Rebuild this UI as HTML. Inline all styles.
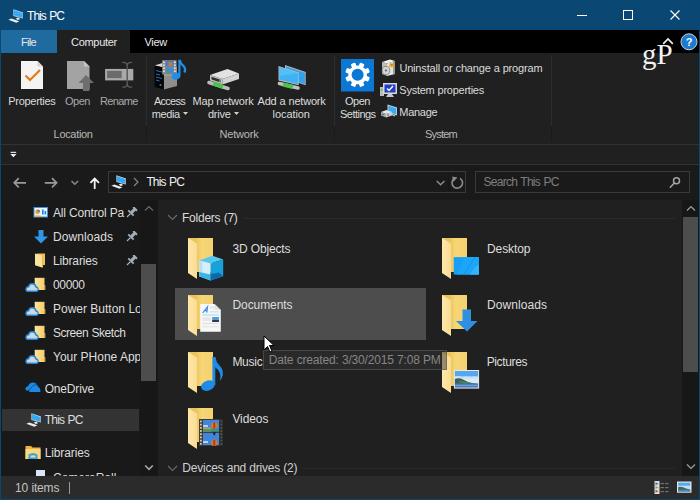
<!DOCTYPE html>
<html><head><meta charset="utf-8"><style>
html,body{margin:0;padding:0;width:700px;height:500px;overflow:hidden;background:#202020;font-family:"Liberation Sans", sans-serif;}
#r{position:relative;width:700px;height:500px;overflow:hidden;}
</style></head><body><div id="r">
<div style="position:absolute;left:0px;top:0px;width:700px;height:30px;background:#0a4873;"></div>
<svg style="position:absolute;left:4.8px;top:5.8px;" width="20" height="18" viewBox="0 0 20 18">
<polygon points="8.4,3.2 18,6.5 18,12.6 8.4,10.1" fill="#d6dde2"/>
<polygon points="9,4.1 17.3,6.9 17.3,11.8 9,9.6" fill="#33aaf6"/>
<polygon points="17.3,6.9 18,6.5 18,12.6 17.3,11.8" fill="#8a9aa6"/>
<polygon points="10.8,12.2 13.5,11.6 15.2,13.3 12.4,13.9" fill="#e6e6e6"/>
<polygon points="3.3,13.7 6.3,12.5 14.4,15.2 11.4,16.7" fill="#ececec"/>
</svg>
<div style="position:absolute;left:577px;top:15px;width:10px;height:1px;background:#fff;"></div>
<div style="position:absolute;left:623px;top:10px;width:10px;height:10px;background:transparent;border:1px solid #fff;box-sizing:border-box;"></div>
<svg style="position:absolute;left:670px;top:10px;" width="10" height="10" viewBox="0 0 10 10"><path d="M0.5 0.5 L9.5 9.5 M9.5 0.5 L0.5 9.5" stroke="#fff" stroke-width="1.1"/></svg>
<div style="position:absolute;left:0px;top:30px;width:700px;height:23px;background:#000;"></div>
<div style="position:absolute;left:1px;top:30px;width:56px;height:23px;background:#1f6a9e;"></div>
<div style="position:absolute;left:57px;top:30px;width:73px;height:23px;background:#202020;"></div>
<svg style="position:absolute;left:680px;top:33px;" width="18" height="18" viewBox="0 0 18 18"><circle cx="9" cy="8.8" r="8" fill="#1a7ad4" stroke="#cfcfcf" stroke-width="1"/><text x="9" y="13" font-family="Liberation Sans" font-weight="bold" font-size="11" fill="#fff" text-anchor="middle">?</text></svg>
<div style="position:absolute;left:1px;top:53px;width:698px;height:91px;background:#202020;"></div>
<div style="position:absolute;left:146px;top:55px;width:1px;height:71px;background:#2d2d2d;"></div>
<div style="position:absolute;left:146px;top:126px;width:1px;height:15px;background:#1a1a1a;"></div>
<div style="position:absolute;left:334px;top:55px;width:1px;height:71px;background:#2d2d2d;"></div>
<div style="position:absolute;left:334px;top:126px;width:1px;height:15px;background:#1a1a1a;"></div>
<div style="position:absolute;left:551px;top:55px;width:1px;height:71px;background:#2d2d2d;"></div>
<div style="position:absolute;left:551px;top:126px;width:1px;height:15px;background:#1a1a1a;"></div>
<svg style="position:absolute;left:21px;top:60px;" width="23" height="30" viewBox="0 0 23 30">
<path d="M0 1 H16.5 L22 6.5 V29 H0 Z" fill="#f4f4f4"/>
<path d="M16.5 1 V6.5 H22 Z" fill="#d4d4d4"/>
<path d="M4.5 15.5 L9 20 L19 10" stroke="#e07b1a" stroke-width="2.2" fill="none"/>
</svg>
<svg style="position:absolute;left:67px;top:60px;" width="28" height="31" viewBox="0 0 28 31">
<path d="M0 1 H17 L22.5 6.5 V29 H0 Z" fill="#a3a3a3"/>
<path d="M17 1 V6.5 H22.5 Z" fill="#c4c4c4"/>
<path d="M11.5 23 L19 15 L27 23 H22.5 V31 H16 V23 Z" fill="#6e6e6e"/>
</svg>
<svg style="position:absolute;left:104px;top:60px;" width="30" height="30" viewBox="0 0 30 30">
<rect x="1.1" y="8.9" width="28.2" height="11.5" fill="#a9a9a9"/>
<rect x="3.1" y="10.9" width="14.6" height="7.2" fill="#6b6b6b"/>
<path d="M23.2 5 V24.5" stroke="#555" stroke-width="1.4"/>
<path d="M18.3 2.3 Q23.2 2 23.2 6 M28.1 2.3 Q23.2 2 23.2 6 M18.3 27.2 Q23.2 27.5 23.2 23.5 M28.1 27.2 Q23.2 27.5 23.2 23.5" stroke="#5c5c5c" stroke-width="1.3" fill="none"/>
</svg>
<svg style="position:absolute;left:145px;top:55px;" width="44" height="38" viewBox="0 0 44 38">
<polygon points="9.6,10.4 17.5,8 32,12 18.8,12.5" fill="#d8d8d8"/>
<polygon points="18.8,12.5 32,12 32,31 18.8,34.4" fill="#8e8e8e"/>
<polygon points="18.8,12.5 32,12 32,20 18.8,21" fill="#a8a8a8"/>
<polygon points="9.6,10.4 18.8,12.5 18.8,34.4 9.6,32" fill="#060606"/>
<path d="M11 15.5 L17 17 M11 19 L15 20 M11 22 L17 23.5 M11 25 L14.5 26" stroke="#2a80d0" stroke-width="0.9"/>
<circle cx="15.5" cy="30" r="1" fill="#2a80d0"/>
<rect x="17.2" y="5.2" width="14.4" height="14.4" fill="#8a8a8a"/>
<g fill="#e0e0e0"><rect x="18" y="6.5" width="1.8" height="1.5"/><rect x="18" y="9.5" width="1.8" height="1.5"/><rect x="18" y="12.5" width="1.8" height="1.5"/><rect x="18" y="15.5" width="1.8" height="1.5"/>
<rect x="29" y="6.5" width="1.8" height="1.5"/><rect x="29" y="9.5" width="1.8" height="1.5"/><rect x="29" y="12.5" width="1.8" height="1.5"/><rect x="29" y="15.5" width="1.8" height="1.5"/></g>
<rect x="20.8" y="6" width="7.6" height="5.6" fill="#3f7fd0"/>
<rect x="23.5" y="7" width="3.5" height="4" fill="#c08030"/>
<rect x="20.8" y="12.8" width="7.6" height="6" fill="#4a86d6"/>
<rect x="21" y="16" width="4" height="2.5" fill="#50a060"/>
<path d="M34.4 4.8 V21" stroke="#1e8ee8" stroke-width="2.2"/>
<path d="M34.6 5 Q35.5 9 38.5 11 Q41 13.5 39.5 17.5" stroke="#1e8ee8" stroke-width="2.4" fill="none"/>
<ellipse cx="31" cy="21.3" rx="4.3" ry="3.3" fill="#1e8ee8" transform="rotate(-15 31 21.3)"/>
</svg>
<svg style="position:absolute;left:183px;top:112px;" width="5" height="3" viewBox="0 0 5 3"><polygon points="0,0 5,0 2.5,3" fill="#d0d0d0"/></svg>
<svg style="position:absolute;left:204px;top:62px;" width="38" height="30" viewBox="0 0 38 30">
<line x1="5" y1="20.5" x2="24" y2="26.5" stroke="#bdbdbd" stroke-width="3.6" stroke-linecap="round"/>
<line x1="9" y1="21.8" x2="19" y2="25" stroke="#46c846" stroke-width="3.8"/>
<polygon points="6,13 23.5,7 35,11.5 18.5,17" fill="#e2e2e2"/>
<polygon points="6,13 18.5,17 18.5,22.5 6,18.5" fill="#c4c4c4"/>
<polygon points="7.5,14.8 16.5,17.8 16.5,20.5 7.5,17.5" fill="#303030"/>
<rect x="15" y="18.3" width="1.2" height="1.6" fill="#3c3"/>
<polygon points="18.5,17 35,11.5 35,17 18.5,22.5" fill="#d2d2d2"/>
</svg>
<svg style="position:absolute;left:234px;top:112px;" width="5" height="3" viewBox="0 0 5 3"><polygon points="0,0 5,0 2.5,3" fill="#d0d0d0"/></svg>
<svg style="position:absolute;left:277px;top:64px;" width="30" height="27" viewBox="0 0 30 27">
<polygon points="8,1 28.7,8 28.7,21.3 8,14.5" fill="#b8b8b8"/>
<polygon points="8.8,2.2 27.9,8.7 27.9,20.3 8.8,13.8" fill="#2ea4ee"/>
<line x1="2.5" y1="19.5" x2="21" y2="24" stroke="#c0c0c0" stroke-width="3.6" stroke-linecap="round"/>
<line x1="6" y1="20.5" x2="16" y2="23" stroke="#4cc24c" stroke-width="4"/>
<polygon points="1.5,2 21.7,8.5 21.7,21.3 1.5,16.5" fill="#bcbcbc"/>
<polygon points="2.3,3 20.9,9.2 20.9,20.3 2.3,15.5" fill="#3db3f5"/>
<polygon points="2.3,3 20.9,9.2 2.3,12" fill="#62c4fa" opacity="0.6"/>
</svg>
<svg style="position:absolute;left:341px;top:59px;" width="33" height="33" viewBox="0 0 33 33">
<rect x="0" y="0" width="33" height="32.5" fill="#0a78d4"/>
<g transform="translate(16.6 15.8)">
<circle r="9.4" fill="#fff"/>
<g fill="#fff"><rect x="-2.4" y="-12.4" width="4.8" height="5" rx="1" transform="rotate(22.5)"/><rect x="-2.4" y="-12.4" width="4.8" height="5" rx="1" transform="rotate(67.5)"/><rect x="-2.4" y="-12.4" width="4.8" height="5" rx="1" transform="rotate(112.5)"/><rect x="-2.4" y="-12.4" width="4.8" height="5" rx="1" transform="rotate(157.5)"/><rect x="-2.4" y="-12.4" width="4.8" height="5" rx="1" transform="rotate(202.5)"/><rect x="-2.4" y="-12.4" width="4.8" height="5" rx="1" transform="rotate(247.5)"/><rect x="-2.4" y="-12.4" width="4.8" height="5" rx="1" transform="rotate(292.5)"/><rect x="-2.4" y="-12.4" width="4.8" height="5" rx="1" transform="rotate(337.5)"/></g>
<circle r="6" fill="#0a78d4"/>
</g>
</svg>
<svg style="position:absolute;left:381px;top:59px;" width="16" height="18" viewBox="0 0 16 18">
<polygon points="1,3 9,0.5 14,2 6,4.5" fill="#f2f2f2"/>
<polygon points="1,3 6,4.5 6,17 1,15" fill="#bdbdbd"/>
<polygon points="6,4.5 14,2 14,15 6,17" fill="#e4e4e4"/>
<polygon points="12,2.6 14,2 14,15 12,15.6" fill="#9a9a9a"/>
<ellipse cx="5" cy="11.5" rx="3.8" ry="4.2" fill="#d4d4d4" stroke="#7a7a7a" stroke-width="0.8"/>
<circle cx="5" cy="11.5" r="1.1" fill="#666"/>
<circle cx="10.3" cy="6.3" r="2.3" fill="#f2b51c"/>
<circle cx="10.8" cy="5.8" r="0.9" fill="#e05a20"/>
</svg>
<svg style="position:absolute;left:380px;top:82px;" width="17" height="16" viewBox="0 0 17 16">
<rect x="0" y="5" width="4" height="9" fill="#bdbdbd"/>
<rect x="1" y="7" width="1.5" height="1.5" fill="#3c3"/>
<rect x="3" y="1" width="14" height="11" fill="#d8d8d8"/>
<rect x="4.5" y="2.5" width="11" height="8" fill="#1f3fc8"/>
<path d="M7 6.5 L9 8.5 L13 4" stroke="#fff" stroke-width="1.4" fill="none"/>
<polygon points="8,12 12,12 14,15 6,15" fill="#c8c8c8"/>
</svg>
<svg style="position:absolute;left:380px;top:103px;" width="18" height="15" viewBox="0 0 18 15">
<polygon points="7.5,1.5 17,4.5 17,12.5 7.5,9.5" fill="#d8d8d8"/>
<polygon points="8.3,2.6 16.3,5.2 16.3,11.6 8.3,9" fill="#3aaaf5"/>
<polygon points="12,11 15,12 15,13.5 12,12.5" fill="#bdbdbd"/>
<polygon points="1,9 6.5,7 12,9 6,11" fill="#e6e6e6"/>
<polygon points="1,9 6,11 6,14.5 1,12.5" fill="#a8a8a8"/>
<polygon points="6,11 12,9 12,12.5 6,14.5" fill="#cfcfcf"/>
<circle cx="3" cy="11.5" r="0.8" fill="#555"/><circle cx="8" cy="12" r="0.8" fill="#555"/>
</svg>
<div style="position:absolute;left:642px;top:39.5px;font-family:'Liberation Serif',serif;font-size:29px;line-height:29px;color:#f2f2f2;letter-spacing:0px;z-index:5">gP</div>
<svg style="position:absolute;left:662px;top:37px;" width="12" height="8" viewBox="0 0 12 8"><path d="M1.2 6.8 L6 2 L10.8 6.8" stroke="#ececec" stroke-width="1.7" fill="none"/></svg>
<div style="position:absolute;left:1px;top:144px;width:698px;height:1px;background:#323232;"></div>
<div style="position:absolute;left:1px;top:145px;width:698px;height:19px;background:#202020;"></div>
<div style="position:absolute;left:1px;top:164px;width:698px;height:1px;background:#323232;"></div>
<svg style="position:absolute;left:10px;top:151px;" width="7" height="7" viewBox="0 0 7 7"><rect x="0.6" y="0.8" width="5.6" height="1.1" fill="#f0f0f0"/><polygon points="0.3,3 6.5,3 3.4,6.3" fill="#f0f0f0"/></svg>
<div style="position:absolute;left:1px;top:165px;width:698px;height:35px;background:#1a1a1a;"></div>
<svg style="position:absolute;left:12px;top:176px;" width="16" height="14" viewBox="0 0 16 14"><path d="M2.2 6.8 H14 M6.8 2.2 L2.2 6.8 L6.8 11.4" stroke="#9a9a9a" stroke-width="1.7" fill="none"/></svg>
<svg style="position:absolute;left:43px;top:176px;" width="16" height="14" viewBox="0 0 16 14"><path d="M1.8 6.8 H13.6 M9 2.2 L13.6 6.8 L9 11.4" stroke="#9a9a9a" stroke-width="1.7" fill="none"/></svg>
<svg style="position:absolute;left:70px;top:180px;" width="10" height="6" viewBox="0 0 10 6"><path d="M1.5 1 L4.8 4.3 L8.1 1" stroke="#8a8a8a" stroke-width="1.5" fill="none"/></svg>
<svg style="position:absolute;left:89px;top:176px;" width="12" height="14" viewBox="0 0 12 14"><path d="M5.7 13 V2.6 M1.4 6.8 L5.7 2.5 L10 6.8" stroke="#f4f4f4" stroke-width="1.8" fill="none"/></svg>
<div style="position:absolute;left:108px;top:171px;width:358px;height:22px;background:transparent;border:1px solid #3a3a3a;box-sizing:border-box;"></div>
<svg style="position:absolute;left:108px;top:172px;" width="20" height="18" viewBox="0 0 20 18">
<polygon points="8.4,3.2 18,6.5 18,12.6 8.4,10.1" fill="#d6dde2"/>
<polygon points="9,4.1 17.3,6.9 17.3,11.8 9,9.6" fill="#33aaf6"/>
<polygon points="17.3,6.9 18,6.5 18,12.6 17.3,11.8" fill="#8a9aa6"/>
<polygon points="10.8,12.2 13.5,11.6 15.2,13.3 12.4,13.9" fill="#e6e6e6"/>
<polygon points="3.3,13.7 6.3,12.5 14.4,15.2 11.4,16.7" fill="#ececec"/>
</svg>
<svg style="position:absolute;left:133px;top:177px;" width="6" height="10" viewBox="0 0 6 10"><path d="M1 1 L5 5 L1 9" stroke="#8a8a8a" stroke-width="1.1" fill="none"/></svg>
<svg style="position:absolute;left:436px;top:180px;" width="10" height="7" viewBox="0 0 10 7"><path d="M0.8 1 L4.6 4.8 L8.4 1" stroke="#8c8c8c" stroke-width="1.5" fill="none"/></svg>
<div style="position:absolute;left:448px;top:172px;width:1px;height:20px;background:#161616;"></div>
<svg style="position:absolute;left:450px;top:175px;" width="15" height="15" viewBox="0 0 15 15"><path d="M10.05 3.31 A5.3 5.3 0 1 1 3.2 4.4" stroke="#8c8c8c" stroke-width="1.6" fill="none"/><polygon points="2.2,1.6 7.4,2.5 3.2,6.9" fill="#8c8c8c"/></svg>
<div style="position:absolute;left:475px;top:171px;width:215px;height:22px;background:transparent;border:1px solid #3a3a3a;box-sizing:border-box;"></div>
<svg style="position:absolute;left:668px;top:176px;" width="13" height="13" viewBox="0 0 13 13"><circle cx="8.5" cy="4.8" r="3" stroke="#a4a4a4" stroke-width="1.5" fill="none"/><path d="M6.4 7 L2.3 11.2" stroke="#a4a4a4" stroke-width="1.6" stroke-linecap="round"/></svg>
<div style="position:absolute;left:1px;top:200px;width:140px;height:276px;background:#191919;"></div>
<div style="position:absolute;left:140px;top:200px;width:18px;height:276px;background:#171717;"></div>
<div style="position:absolute;left:141px;top:264px;width:15px;height:117px;background:#4d4d4d;"></div>
<svg style="position:absolute;left:144px;top:205px;" width="10" height="7" viewBox="0 0 10 7"><path d="M1 5.5 L5 1.5 L9 5.5" stroke="#6a6a6a" stroke-width="1.2" fill="none"/></svg>
<svg style="position:absolute;left:144px;top:464px;" width="10" height="7" viewBox="0 0 10 7"><path d="M1.2 1.5 L5 5.3 L8.8 1.5" stroke="#a8a8a8" stroke-width="1.6" fill="none"/></svg>
<div style="position:absolute;left:2px;top:409px;width:137px;height:22px;background:#333333;"></div>
<svg style="position:absolute;left:33px;top:206px;" width="16" height="13" viewBox="0 0 16 13"><rect x="0.5" y="1" width="14.5" height="10.5" fill="#3a92e0"/><rect x="1.5" y="2" width="12.5" height="8.5" fill="#eaf4fc"/><circle cx="4.6" cy="5.8" r="2.4" fill="#f0a020"/><path d="M4.6 5.8 V3.4 A2.4 2.4 0 0 1 7 5.8 Z" fill="#2a7fd0"/><rect x="9" y="3.5" width="1.6" height="5" fill="#2a7fd0"/><rect x="11.5" y="5" width="1.6" height="3.5" fill="#2a7fd0"/><rect x="1.5" y="9.5" width="6" height="1.5" fill="#e8a040"/></svg>
<svg style="position:absolute;left:126px;top:207px;" width="12" height="12" viewBox="0 0 12 12"><g transform="translate(6.3 4.7) rotate(45)" fill="#a3adb5"><rect x="-2.6" y="-5" width="5.2" height="2"/><rect x="-1.6" y="-3.5" width="3.2" height="5"/><rect x="-3.8" y="1" width="7.6" height="1.8"/><rect x="-0.6" y="2.5" width="1.2" height="5"/></g></svg>
<svg style="position:absolute;left:34px;top:230px;" width="14" height="14" viewBox="0 0 14 14"><rect x="4.5" y="0" width="5" height="7" fill="#2f96e8"/><polygon points="0,6.5 14,6.5 7,13.5" fill="#2f96e8"/></svg>
<svg style="position:absolute;left:126px;top:231px;" width="12" height="12" viewBox="0 0 12 12"><g transform="translate(6.3 4.7) rotate(45)" fill="#a3adb5"><rect x="-2.6" y="-5" width="5.2" height="2"/><rect x="-1.6" y="-3.5" width="3.2" height="5"/><rect x="-3.8" y="1" width="7.6" height="1.8"/><rect x="-0.6" y="2.5" width="1.2" height="5"/></g></svg>
<svg style="position:absolute;left:34px;top:253px;" width="12" height="15" viewBox="0 0 12 15"><rect x="3" y="0.5" width="8" height="11.5" fill="#eec05a"/><polygon points="1,0.5 8,2.5 8,14.5 1,12.2" fill="#fde29a"/><polygon points="8,2.5 9,2.8 9,14.5 8,14.5" fill="#e9b850"/></svg>
<svg style="position:absolute;left:126px;top:255px;" width="12" height="12" viewBox="0 0 12 12"><g transform="translate(6.3 4.7) rotate(45)" fill="#a3adb5"><rect x="-2.6" y="-5" width="5.2" height="2"/><rect x="-1.6" y="-3.5" width="3.2" height="5"/><rect x="-3.8" y="1" width="7.6" height="1.8"/><rect x="-0.6" y="2.5" width="1.2" height="5"/></g></svg>
<svg style="position:absolute;left:25px;top:277px;" width="22" height="16" viewBox="0 0 22 16"><defs><linearGradient id="cfg" x1="0" x2="1"><stop offset="0" stop-color="#fde59c"/><stop offset="1" stop-color="#f3cd6a"/></linearGradient></defs><rect x="9.7" y="0.8" width="9.8" height="12.2" fill="url(#cfg)"/><rect x="19.3" y="8" width="1" height="5" fill="#e9bf5a"/><path d="M2.6 14.3 H11 Q13.2 14.3 13.1 12.1 Q13 10.2 11 10 Q10.4 6.8 7.2 6.8 Q4.3 6.8 3.7 9.7 Q1 9.9 1 12.2 Q1.1 14.3 2.6 14.3 Z" fill="#d6d6d6" stroke="#1f8ae6" stroke-width="1.4"/></svg>
<svg style="position:absolute;left:25px;top:301px;" width="22" height="16" viewBox="0 0 22 16"><defs><linearGradient id="cfg" x1="0" x2="1"><stop offset="0" stop-color="#fde59c"/><stop offset="1" stop-color="#f3cd6a"/></linearGradient></defs><rect x="9.7" y="0.8" width="9.8" height="12.2" fill="url(#cfg)"/><rect x="19.3" y="8" width="1" height="5" fill="#e9bf5a"/><path d="M2.6 14.3 H11 Q13.2 14.3 13.1 12.1 Q13 10.2 11 10 Q10.4 6.8 7.2 6.8 Q4.3 6.8 3.7 9.7 Q1 9.9 1 12.2 Q1.1 14.3 2.6 14.3 Z" fill="#d6d6d6" stroke="#1f8ae6" stroke-width="1.4"/></svg>
<svg style="position:absolute;left:25px;top:325px;" width="22" height="16" viewBox="0 0 22 16"><defs><linearGradient id="cfg" x1="0" x2="1"><stop offset="0" stop-color="#fde59c"/><stop offset="1" stop-color="#f3cd6a"/></linearGradient></defs><rect x="9.7" y="0.8" width="9.8" height="12.2" fill="url(#cfg)"/><rect x="19.3" y="8" width="1" height="5" fill="#e9bf5a"/><path d="M2.6 14.3 H11 Q13.2 14.3 13.1 12.1 Q13 10.2 11 10 Q10.4 6.8 7.2 6.8 Q4.3 6.8 3.7 9.7 Q1 9.9 1 12.2 Q1.1 14.3 2.6 14.3 Z" fill="#d6d6d6" stroke="#1f8ae6" stroke-width="1.4"/></svg>
<svg style="position:absolute;left:25px;top:349px;" width="22" height="16" viewBox="0 0 22 16"><defs><linearGradient id="cfg" x1="0" x2="1"><stop offset="0" stop-color="#fde59c"/><stop offset="1" stop-color="#f3cd6a"/></linearGradient></defs><rect x="9.7" y="0.8" width="9.8" height="12.2" fill="url(#cfg)"/><rect x="19.3" y="8" width="1" height="5" fill="#e9bf5a"/><path d="M2.6 14.3 H11 Q13.2 14.3 13.1 12.1 Q13 10.2 11 10 Q10.4 6.8 7.2 6.8 Q4.3 6.8 3.7 9.7 Q1 9.9 1 12.2 Q1.1 14.3 2.6 14.3 Z" fill="#d6d6d6" stroke="#1f8ae6" stroke-width="1.4"/></svg>
<svg style="position:absolute;left:25px;top:381px;" width="16" height="12" viewBox="0 0 16 12"><path d="M1.5 9.5 Q0.3 9.3 0.4 7.6 Q0.6 5.3 3.2 5.2 Q4.3 1.6 8 1.5 Q11.2 1.5 12.2 4.2 Q13.5 4.5 13 9.5 Z" fill="#1a88e6"/><path d="M4.3 10.6 Q3.9 7.8 6.3 7.3 Q7.6 4 10.6 4 Q13 4.1 13.7 6.6 Q15.6 7 15.3 10.6 Z" fill="#1a88e6" stroke="#151515" stroke-width="0.9"/><path d="M4.3 11 Q3.9 7.8 6.3 7.3 Q7.6 4 10.6 4 Q13 4.1 13.7 6.6 Q15.6 7 15.3 11 Z" fill="#1a88e6"/></svg>
<svg style="position:absolute;left:22.8px;top:409.8px;" width="20" height="18" viewBox="0 0 20 18">
<polygon points="8.4,3.2 18,6.5 18,12.6 8.4,10.1" fill="#d6dde2"/>
<polygon points="9,4.1 17.3,6.9 17.3,11.8 9,9.6" fill="#33aaf6"/>
<polygon points="17.3,6.9 18,6.5 18,12.6 17.3,11.8" fill="#8a9aa6"/>
<polygon points="10.8,12.2 13.5,11.6 15.2,13.3 12.4,13.9" fill="#e6e6e6"/>
<polygon points="3.3,13.7 6.3,12.5 14.4,15.2 11.4,16.7" fill="#ececec"/>
</svg>
<svg style="position:absolute;left:25px;top:445px;" width="16" height="15" viewBox="0 0 16 15"><path d="M0.5 1 H6 L7.5 2.5 H15.5 V14 H0.5 Z" fill="#e9b44a"/><rect x="0.5" y="4" width="15" height="10" fill="#fdd77c"/><path d="M3.5 14 V9.5 Q8 6.5 12.5 9.5 V14 H10.5 V10.8 Q8 9.5 5.5 10.8 V14 Z" fill="#30a8e6"/><rect x="3.5" y="12.5" width="9" height="1.5" fill="#30a8e6"/></svg>
<svg style="position:absolute;left:36px;top:470px;" width="10" height="8" viewBox="0 0 10 8"><rect x="0" y="0" width="9" height="8" fill="#d8e8f8"/></svg>
<div style="position:absolute;left:158px;top:200px;width:524px;height:276px;background:#202020;"></div>
<div style="position:absolute;left:682px;top:200px;width:17px;height:276px;background:#171717;"></div>
<div style="position:absolute;left:683px;top:217px;width:15px;height:155px;background:#4d4d4d;"></div>
<svg style="position:absolute;left:686px;top:205px;" width="10" height="7" viewBox="0 0 10 7"><path d="M1 5.5 L5 1.5 L9 5.5" stroke="#a0a0a0" stroke-width="1.2" fill="none"/></svg>
<svg style="position:absolute;left:686px;top:463px;" width="10" height="7" viewBox="0 0 10 7"><path d="M1 1.5 L5 5.5 L9 1.5" stroke="#a0a0a0" stroke-width="1.2" fill="none"/></svg>
<svg style="position:absolute;left:167px;top:214px;" width="11" height="7" viewBox="0 0 11 7"><path d="M1 1 L5.5 5.5 L10 1" stroke="#6a6a6a" stroke-width="1.1" fill="none"/></svg>
<div style="position:absolute;left:243px;top:218px;width:432px;height:1px;background:#2a2a2a;"></div>
<svg style="position:absolute;left:167px;top:465px;" width="11" height="7" viewBox="0 0 11 7"><path d="M1 1 L5.5 5.5 L10 1" stroke="#6a6a6a" stroke-width="1.1" fill="none"/></svg>
<div style="position:absolute;left:303px;top:468px;width:372px;height:1px;background:#2a2a2a;"></div>
<div style="position:absolute;left:175px;top:288px;width:251px;height:52px;background:#4d4d4d;"></div>
<svg style="position:absolute;left:188px;top:238px;" width="26" height="42" viewBox="0 0 26 42">
<defs><linearGradient id="fg" x1="0" x2="1"><stop offset="0.3" stop-color="#ecc25c"/><stop offset="0.55" stop-color="#f7d676"/><stop offset="1" stop-color="#f5d170"/></linearGradient>
<linearGradient id="ff" x1="0" x2="1"><stop offset="0" stop-color="#fde8aa"/><stop offset="1" stop-color="#f9dc92"/></linearGradient></defs>
<rect x="0" y="0" width="25" height="34" fill="url(#fg)"/>
<polygon points="0,0 9,5.5 9,41 0,35" fill="url(#ff)"/>
</svg>
<svg style="position:absolute;left:188px;top:295px;" width="26" height="42" viewBox="0 0 26 42">
<defs><linearGradient id="fg" x1="0" x2="1"><stop offset="0.3" stop-color="#ecc25c"/><stop offset="0.55" stop-color="#f7d676"/><stop offset="1" stop-color="#f5d170"/></linearGradient>
<linearGradient id="ff" x1="0" x2="1"><stop offset="0" stop-color="#fde8aa"/><stop offset="1" stop-color="#f9dc92"/></linearGradient></defs>
<rect x="0" y="0" width="25" height="34" fill="url(#fg)"/>
<polygon points="0,0 9,5.5 9,41 0,35" fill="url(#ff)"/>
</svg>
<svg style="position:absolute;left:188px;top:352px;" width="26" height="42" viewBox="0 0 26 42">
<defs><linearGradient id="fg" x1="0" x2="1"><stop offset="0.3" stop-color="#ecc25c"/><stop offset="0.55" stop-color="#f7d676"/><stop offset="1" stop-color="#f5d170"/></linearGradient>
<linearGradient id="ff" x1="0" x2="1"><stop offset="0" stop-color="#fde8aa"/><stop offset="1" stop-color="#f9dc92"/></linearGradient></defs>
<rect x="0" y="0" width="25" height="34" fill="url(#fg)"/>
<polygon points="0,0 9,5.5 9,41 0,35" fill="url(#ff)"/>
</svg>
<svg style="position:absolute;left:188px;top:408px;" width="26" height="42" viewBox="0 0 26 42">
<defs><linearGradient id="fg" x1="0" x2="1"><stop offset="0.3" stop-color="#ecc25c"/><stop offset="0.55" stop-color="#f7d676"/><stop offset="1" stop-color="#f5d170"/></linearGradient>
<linearGradient id="ff" x1="0" x2="1"><stop offset="0" stop-color="#fde8aa"/><stop offset="1" stop-color="#f9dc92"/></linearGradient></defs>
<rect x="0" y="0" width="25" height="34" fill="url(#fg)"/>
<polygon points="0,0 9,5.5 9,41 0,35" fill="url(#ff)"/>
</svg>
<svg style="position:absolute;left:442px;top:238px;" width="26" height="42" viewBox="0 0 26 42">
<defs><linearGradient id="fg" x1="0" x2="1"><stop offset="0.3" stop-color="#ecc25c"/><stop offset="0.55" stop-color="#f7d676"/><stop offset="1" stop-color="#f5d170"/></linearGradient>
<linearGradient id="ff" x1="0" x2="1"><stop offset="0" stop-color="#fde8aa"/><stop offset="1" stop-color="#f9dc92"/></linearGradient></defs>
<rect x="0" y="0" width="25" height="34" fill="url(#fg)"/>
<polygon points="0,0 9,5.5 9,41 0,35" fill="url(#ff)"/>
</svg>
<svg style="position:absolute;left:442px;top:295px;" width="26" height="42" viewBox="0 0 26 42">
<defs><linearGradient id="fg" x1="0" x2="1"><stop offset="0.3" stop-color="#ecc25c"/><stop offset="0.55" stop-color="#f7d676"/><stop offset="1" stop-color="#f5d170"/></linearGradient>
<linearGradient id="ff" x1="0" x2="1"><stop offset="0" stop-color="#fde8aa"/><stop offset="1" stop-color="#f9dc92"/></linearGradient></defs>
<rect x="0" y="0" width="25" height="34" fill="url(#fg)"/>
<polygon points="0,0 9,5.5 9,41 0,35" fill="url(#ff)"/>
</svg>
<svg style="position:absolute;left:442px;top:352px;" width="26" height="42" viewBox="0 0 26 42">
<defs><linearGradient id="fg" x1="0" x2="1"><stop offset="0.3" stop-color="#ecc25c"/><stop offset="0.55" stop-color="#f7d676"/><stop offset="1" stop-color="#f5d170"/></linearGradient>
<linearGradient id="ff" x1="0" x2="1"><stop offset="0" stop-color="#fde8aa"/><stop offset="1" stop-color="#f9dc92"/></linearGradient></defs>
<rect x="0" y="0" width="25" height="34" fill="url(#fg)"/>
<polygon points="0,0 9,5.5 9,41 0,35" fill="url(#ff)"/>
</svg>
<svg style="position:absolute;left:198px;top:255px;" width="27" height="27" viewBox="0 0 27 27">
<polygon points="14.4,0.8 25.2,4.4 12.6,8.6 1.2,5.6" fill="#55c8ee"/>
<polygon points="1.2,5.6 12.6,8.6 12.6,25.4 1.2,21.2" fill="#d6eefa"/>
<polygon points="1.2,5.6 4.2,6.4 4.2,22.3 1.2,21.2" fill="#b4dff5"/>
<polygon points="1.2,17 12.6,19.5 12.6,25.4 1.2,21.2" fill="#3ab6e6"/>
<polygon points="12.6,8.6 25.2,4.4 25.2,21.2 12.6,25.4" fill="#17a2dc"/>
<polygon points="12.6,19 21,17.5 25.2,21.2 12.6,25.4" fill="#0c6aaa"/>
</svg>
<svg style="position:absolute;left:200px;top:304px;" width="22" height="28" viewBox="0 0 22 28">
<path d="M0.2 0 H14.5 L20.8 6 V27.7 H0.2 Z" fill="#f7f7f7"/>
<path d="M14.5 0 V6 H20.8 Z" fill="#e2e2e2"/>
<path d="M2.8 8.8 L7.5 2.8 L6.8 8.6 M4.5 6.6 L7.2 6.6" stroke="#3a8ee0" stroke-width="1.2" fill="none"/>
<rect x="10" y="2.8" width="4" height="1.5" fill="#cfe6f5"/>
<rect x="9.7" y="7" width="9.2" height="1.6" fill="#cfe6f5"/>
<rect x="2.3" y="10.4" width="16.6" height="1.1" fill="#a6d8f0"/>
<rect x="2.3" y="13.3" width="8.7" height="3.6" fill="#e6e6e6"/>
<rect x="12.2" y="13" width="6.7" height="5" fill="#5a9ad0"/>
<rect x="12.2" y="16" width="6.7" height="2" fill="#2a3a4a"/>
<rect x="2.3" y="18.9" width="16.6" height="1.2" fill="#e2e2e2"/>
<rect x="2.3" y="22.3" width="16.6" height="1" fill="#e2e2e2"/>
</svg>
<svg style="position:absolute;left:200px;top:356px;" width="25" height="37" viewBox="0 0 25 37">
<rect x="12.4" y="1.1" width="2.9" height="28" fill="#1f8be6"/>
<path d="M12.4 1.1 L15.3 1.1 Q16 6 19.5 9.5 Q23.5 13.5 22.8 19 Q22.3 22.5 19.8 24.8 Q21 21 20 17.5 Q18.8 13.5 15.3 11.5 Z" fill="#1f8be6"/>
<ellipse cx="7.9" cy="29.6" rx="7" ry="5" fill="#1f8be6" transform="rotate(-20 7.9 29.6)"/>
</svg>
<svg style="position:absolute;left:199px;top:419px;" width="24" height="27" viewBox="0 0 24 27">
<rect x="0" y="0" width="24" height="27" fill="#3c3c3c"/>
<rect x="20.5" y="0" width="3.5" height="27" fill="#2a2a2a"/>
<rect x="1" y="1.5" width="1.8" height="1.8" fill="#d8d0a0"/><rect x="1" y="4.7" width="1.8" height="1.8" fill="#d8d0a0"/><rect x="1" y="7.9" width="1.8" height="1.8" fill="#d8d0a0"/><rect x="1" y="11.1" width="1.8" height="1.8" fill="#d8d0a0"/><rect x="1" y="14.3" width="1.8" height="1.8" fill="#d8d0a0"/><rect x="1" y="17.5" width="1.8" height="1.8" fill="#d8d0a0"/><rect x="1" y="20.7" width="1.8" height="1.8" fill="#d8d0a0"/><rect x="1" y="23.9" width="1.8" height="1.8" fill="#d8d0a0"/><rect x="21.5" y="1.5" width="1.8" height="1.8" fill="#555"/><rect x="21.5" y="4.7" width="1.8" height="1.8" fill="#555"/><rect x="21.5" y="7.9" width="1.8" height="1.8" fill="#555"/><rect x="21.5" y="11.1" width="1.8" height="1.8" fill="#555"/><rect x="21.5" y="14.3" width="1.8" height="1.8" fill="#555"/><rect x="21.5" y="17.5" width="1.8" height="1.8" fill="#555"/><rect x="21.5" y="20.7" width="1.8" height="1.8" fill="#555"/><rect x="21.5" y="23.9" width="1.8" height="1.8" fill="#555"/>
<rect x="4" y="1" width="16" height="11.5" fill="#3f86dc"/>
<rect x="4" y="14" width="16" height="12" fill="#3f86dc"/>
<rect x="4" y="8.5" width="8" height="4" fill="#e0a050" opacity="0.8"/>
<rect x="4" y="6" width="5" height="2" fill="#f0f0f0" opacity="0.7"/>
<circle cx="15.3" cy="6.5" r="3.2" fill="#e07a20"/><rect x="14.3" y="3.5" width="2" height="6" fill="#b03a20"/>
<rect x="4" y="10" width="16" height="2.5" fill="#3a9a50" opacity="0.8"/>
<circle cx="15.3" cy="24" r="3.2" fill="#e07a20"/><rect x="14.3" y="21" width="2" height="6" fill="#b03a20"/>
<path d="M13.5 13.5 L15.3 17 L17 13.5 Z" fill="#222"/>
<rect x="4" y="22" width="5" height="2" fill="#f0f0f0" opacity="0.7"/>
</svg>
<svg style="position:absolute;left:453px;top:256px;" width="27" height="20" viewBox="0 0 27 20">
<rect x="0.7" y="1.1" width="25.2" height="17.5" fill="#15a0f6"/>
<polygon points="12,1.1 25.9,1.1 25.9,18.6 4,18.6" fill="#1ca6f8"/>
<polygon points="10.5,18.6 21.5,1.1 22.5,1.1 11.5,18.6" fill="#0e94ea" opacity="0.8"/>
<path d="M17 18.6 Q21 11 25.9 9 V18.6 Z" fill="#36b4fb"/>
</svg>
<svg style="position:absolute;left:456px;top:309px;" width="22" height="23" viewBox="0 0 22 23"><rect x="6.5" y="0.5" width="8.5" height="12" fill="#2f8fe0"/><polygon points="0,12 21.5,12 11,22.5" fill="#2f8fe0"/></svg>
<svg style="position:absolute;left:453px;top:369px;" width="27" height="21" viewBox="0 0 27 21">
<rect x="0.9" y="1" width="25.2" height="18.6" fill="#e8e8e8"/>
<rect x="1.9" y="2" width="23.2" height="16.6" fill="#d6ebf6"/>
<rect x="1.9" y="2" width="23.2" height="5.5" fill="#58a6ee"/>
<path d="M1.9 7.5 Q6 6.5 9 8 Q14 7 18 8 Q22 7 25.1 8 V9.5 H1.9 Z" fill="#c6e2f2"/>
<path d="M1.9 10 Q6 8.5 10 10.5 Q14 13 19 14 L25.1 14.8 V15.5 H1.9 Z" fill="#3e5c60"/>
<path d="M4 12.3 Q8 11.5 12 13 L18 14 L12 14.5 Z" fill="#3c9a3c"/>
<rect x="1.9" y="14.5" width="23.2" height="4.1" fill="#4a7ec0"/>
<rect x="1.9" y="16" width="23.2" height="1" fill="#8ab0d8" opacity="0.6"/>
</svg>
<div style="position:absolute;left:263px;top:350px;width:184px;height:20px;background:rgba(50,50,50,0.5);border:1px solid rgba(92,92,92,0.6);box-sizing:border-box;z-index:3"></div>
<svg style="position:absolute;left:263px;top:335px;z-index:6" width="12" height="18" viewBox="0 0 12 18"><path d="M1 1 V15 L4.5 11.5 L7 17 L9 16 L6.5 10.5 H11 Z" fill="#fff" stroke="#000" stroke-width="1"/></svg>
<div style="position:absolute;left:1px;top:476px;width:698px;height:23px;background:#2b2b2b;z-index:2;"></div>
<div style="position:absolute;left:69px;top:482px;width:1px;height:12px;background:#9a9a9a;z-index:3;"></div>
<svg style="position:absolute;left:654px;top:481px;z-index:3;" width="16" height="13" viewBox="0 0 16 13">
<rect x="0.5" y="0" width="5" height="13" fill="#dcdcdc"/>
<polygon points="1.5,1.2 4.5,2.7 1.5,4.2" fill="#3a6fb8"/><polygon points="1.5,5 4.5,6.5 1.5,8" fill="#9aa040"/><polygon points="1.5,8.8 4.5,10.3 1.5,11.8" fill="#c84a20"/>
<rect x="6.5" y="2" width="3.5" height="1.2" fill="#6e6e6e"/><rect x="11" y="2" width="3.5" height="1.2" fill="#6e6e6e"/>
<rect x="6.5" y="6" width="3.5" height="1.2" fill="#6e6e6e"/><rect x="11" y="6" width="3.5" height="1.2" fill="#6e6e6e"/>
<rect x="6.5" y="10" width="3.5" height="1.2" fill="#6e6e6e"/><rect x="11" y="10" width="3.5" height="1.2" fill="#6e6e6e"/>
</svg>
<svg style="position:absolute;left:677px;top:481px;z-index:3;" width="15" height="12" viewBox="0 0 15 12"><rect x="0" y="0.5" width="14.5" height="11.2" fill="#e6e6e6"/><rect x="1.2" y="1.7" width="12" height="8.8" fill="#bfe0f4"/><rect x="1.2" y="1.7" width="12" height="3" fill="#5aa8ec"/><path d="M1.2 6 Q5 5 9 7.5 L13.2 8.5 V10.5 H1.2 Z" fill="#3c6a5a"/><rect x="1.2" y="8.8" width="12" height="1.7" fill="#4a86c8"/></svg>
<div style="position:absolute;left:0px;top:30px;width:1px;height:470px;background:#0a4873;"></div>
<div style="position:absolute;left:699px;top:30px;width:1px;height:470px;background:#0a4873;"></div>
<div style="position:absolute;left:0px;top:499px;width:700px;height:1px;background:#0a4873;"></div>
<div style="position:absolute;left:27.00px;top:9.64px;font-size:12px;line-height:12px;color:#ffffff;white-space:nowrap;letter-spacing:-0.948px;word-spacing:0.948px;">This PC</div>
<div style="position:absolute;left:21.00px;top:36.63px;font-size:11px;line-height:11px;color:#e8e8e8;white-space:nowrap;letter-spacing:-0.684px;">File</div>
<div style="position:absolute;left:71.00px;top:36.63px;font-size:11px;line-height:11px;color:#e8e8e8;white-space:nowrap;letter-spacing:-0.287px;">Computer</div>
<div style="position:absolute;left:144.50px;top:36.63px;font-size:11px;line-height:11px;color:#e8e8e8;white-space:nowrap;letter-spacing:-0.289px;">View</div>
<div style="position:absolute;left:8.25px;top:95.63px;font-size:11px;line-height:11px;color:#dcdcdc;white-space:nowrap;letter-spacing:-0.289px;">Properties</div>
<div style="position:absolute;left:65.00px;top:95.63px;font-size:11px;line-height:11px;color:#a9a9a9;white-space:nowrap;letter-spacing:-0.480px;">Open</div>
<div style="position:absolute;left:100.00px;top:95.63px;font-size:11px;line-height:11px;color:#a9a9a9;white-space:nowrap;letter-spacing:-0.663px;">Rename</div>
<div style="position:absolute;left:53.60px;top:129.13px;font-size:11px;line-height:11px;color:#b8b8b8;white-space:nowrap;letter-spacing:-0.324px;">Location</div>
<div style="position:absolute;left:154.00px;top:96.03px;font-size:11px;line-height:11px;color:#dcdcdc;white-space:nowrap;letter-spacing:-0.745px;">Access</div>
<div style="position:absolute;left:151.80px;top:109.03px;font-size:11px;line-height:11px;color:#dcdcdc;white-space:nowrap;letter-spacing:-0.394px;">media</div>
<div style="position:absolute;left:192.50px;top:96.03px;font-size:11px;line-height:11px;color:#dcdcdc;white-space:nowrap;letter-spacing:-0.198px;word-spacing:0.198px;">Map network</div>
<div style="position:absolute;left:208.00px;top:109.03px;font-size:11px;line-height:11px;color:#dcdcdc;white-space:nowrap;letter-spacing:-0.269px;">drive</div>
<div style="position:absolute;left:257.60px;top:96.03px;font-size:11px;line-height:11px;color:#dcdcdc;white-space:nowrap;letter-spacing:-0.212px;word-spacing:0.212px;">Add a network</div>
<div style="position:absolute;left:272.60px;top:109.03px;font-size:11px;line-height:11px;color:#dcdcdc;white-space:nowrap;letter-spacing:-0.090px;">location</div>
<div style="position:absolute;left:219.40px;top:129.13px;font-size:11px;line-height:11px;color:#b8b8b8;white-space:nowrap;letter-spacing:-0.163px;">Network</div>
<div style="position:absolute;left:345.00px;top:95.83px;font-size:11px;line-height:11px;color:#dcdcdc;white-space:nowrap;letter-spacing:-0.480px;">Open</div>
<div style="position:absolute;left:340.00px;top:109.13px;font-size:11px;line-height:11px;color:#dcdcdc;white-space:nowrap;letter-spacing:-0.519px;">Settings</div>
<div style="position:absolute;left:399.40px;top:63.23px;font-size:11px;line-height:11px;color:#dcdcdc;white-space:nowrap;letter-spacing:-0.174px;word-spacing:0.174px;">Uninstall or change a program</div>
<div style="position:absolute;left:399.30px;top:84.83px;font-size:11px;line-height:11px;color:#dcdcdc;white-space:nowrap;letter-spacing:-0.247px;word-spacing:0.247px;">System properties</div>
<div style="position:absolute;left:399.30px;top:106.63px;font-size:11px;line-height:11px;color:#dcdcdc;white-space:nowrap;letter-spacing:-0.294px;">Manage</div>
<div style="position:absolute;left:425.00px;top:129.13px;font-size:11px;line-height:11px;color:#b8b8b8;white-space:nowrap;letter-spacing:-0.781px;">System</div>
<div style="position:absolute;left:146.40px;top:175.64px;font-size:12px;line-height:12px;color:#f0f0f0;white-space:nowrap;letter-spacing:-0.848px;word-spacing:0.848px;">This PC</div>
<div style="position:absolute;left:483.60px;top:176.44px;font-size:12px;line-height:12px;color:#7e7e7e;white-space:nowrap;letter-spacing:-0.734px;word-spacing:0.734px;">Search This PC</div>
<div style="position:absolute;left:53.00px;top:207.14px;font-size:12px;line-height:12px;color:#dedede;white-space:nowrap;letter-spacing:-0.198px;word-spacing:0.198px;">All Control Pa</div>
<div style="position:absolute;left:53.00px;top:231.14px;font-size:12px;line-height:12px;color:#dedede;white-space:nowrap;letter-spacing:0.069px;">Downloads</div>
<div style="position:absolute;left:53.00px;top:255.14px;font-size:12px;line-height:12px;color:#dedede;white-space:nowrap;letter-spacing:-0.159px;">Libraries</div>
<div style="position:absolute;left:53.00px;top:279.14px;font-size:12px;line-height:12px;color:#dedede;white-space:nowrap;letter-spacing:-0.355px;">00000</div>
<div style="position:absolute;left:53.00px;top:303.14px;font-size:12px;line-height:12px;color:#dedede;white-space:nowrap;letter-spacing:0.000px;width:87.0px;overflow:hidden;">Power Button Lo</div>
<div style="position:absolute;left:53.00px;top:327.14px;font-size:12px;line-height:12px;color:#dedede;white-space:nowrap;letter-spacing:-0.471px;word-spacing:0.471px;">Screen Sketch</div>
<div style="position:absolute;left:53.00px;top:351.14px;font-size:12px;line-height:12px;color:#dedede;white-space:nowrap;letter-spacing:0.000px;width:87.0px;overflow:hidden;">Your PHone App</div>
<div style="position:absolute;left:44.70px;top:382.84px;font-size:12px;line-height:12px;color:#dedede;white-space:nowrap;letter-spacing:-0.173px;">OneDrive</div>
<div style="position:absolute;left:44.70px;top:414.14px;font-size:12px;line-height:12px;color:#dedede;white-space:nowrap;letter-spacing:-0.781px;word-spacing:0.781px;">This PC</div>
<div style="position:absolute;left:44.70px;top:446.84px;font-size:12px;line-height:12px;color:#dedede;white-space:nowrap;letter-spacing:-0.115px;">Libraries</div>
<div style="position:absolute;left:53.00px;top:472.14px;font-size:12px;line-height:12px;color:#dedede;white-space:nowrap;letter-spacing:0.000px;">CameraRoll</div>
<div style="position:absolute;left:182.00px;top:211.64px;font-size:12px;line-height:12px;color:#dcdcdc;white-space:nowrap;letter-spacing:-0.242px;word-spacing:0.242px;">Folders (7)</div>
<div style="position:absolute;left:182.30px;top:462.14px;font-size:12px;line-height:12px;color:#d0d0d0;white-space:nowrap;letter-spacing:-0.231px;word-spacing:0.231px;">Devices and drives (2)</div>
<div style="position:absolute;left:232.40px;top:242.94px;font-size:12px;line-height:12px;color:#dedede;white-space:nowrap;letter-spacing:-0.151px;word-spacing:0.151px;">3D Objects</div>
<div style="position:absolute;left:232.50px;top:298.64px;font-size:12px;line-height:12px;color:#dedede;white-space:nowrap;letter-spacing:-0.078px;">Documents</div>
<div style="position:absolute;left:232.40px;top:355.74px;font-size:12px;line-height:12px;color:#dedede;white-space:nowrap;letter-spacing:-0.269px;">Music</div>
<div style="position:absolute;left:232.40px;top:412.94px;font-size:12px;line-height:12px;color:#dedede;white-space:nowrap;letter-spacing:-0.081px;">Videos</div>
<div style="position:absolute;left:487.00px;top:242.94px;font-size:12px;line-height:12px;color:#dedede;white-space:nowrap;letter-spacing:-0.104px;">Desktop</div>
<div style="position:absolute;left:487.00px;top:298.64px;font-size:12px;line-height:12px;color:#dedede;white-space:nowrap;letter-spacing:0.069px;">Downloads</div>
<div style="position:absolute;left:486.70px;top:355.54px;font-size:12px;line-height:12px;color:#dedede;white-space:nowrap;letter-spacing:-0.370px;">Pictures</div>
<div style="position:absolute;left:268.70px;top:354.04px;font-size:12px;line-height:12px;color:#868686;white-space:nowrap;letter-spacing:-0.178px;word-spacing:0.178px;z-index:4;">Date created: 3/30/2015 7:08 PM</div>
<div style="position:absolute;left:15.00px;top:481.94px;font-size:12px;line-height:12px;color:#c4c4c4;white-space:nowrap;letter-spacing:-0.151px;word-spacing:0.151px;z-index:3;">10 items</div>
</div></body></html>
